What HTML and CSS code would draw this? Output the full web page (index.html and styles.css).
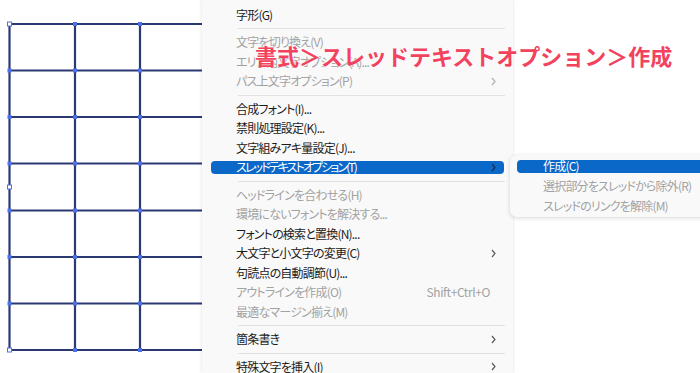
FILE: index.html
```html
<!DOCTYPE html>
<html lang="ja">
<head>
<meta charset="utf-8">
<link rel="stylesheet" href="styles.css">
</head>
<body>
<div class="stage">
  <div class="artboard">
    <svg width="202" height="373" viewBox="0 0 202 373">
      <g class="lines">
        <line x1="9.5" y1="24" x2="202" y2="24"/>
        <line x1="9.5" y1="70.5" x2="202" y2="70.5"/>
        <line x1="9.5" y1="117" x2="202" y2="117"/>
        <line x1="9.5" y1="163.5" x2="202" y2="163.5"/>
        <line x1="9.5" y1="210.5" x2="202" y2="210.5"/>
        <line x1="9.5" y1="257" x2="202" y2="257"/>
        <line x1="9.5" y1="303.5" x2="202" y2="303.5"/>
        <line x1="9.5" y1="350" x2="202" y2="350"/>
        <line x1="9.5" y1="24" x2="9.5" y2="350"/>
        <line x1="75" y1="24" x2="75" y2="350"/>
        <line x1="140" y1="24" x2="140" y2="350"/>
      </g>
      <g class="pts">
        <rect x="73" y="22" width="4" height="4"/><rect x="138" y="22" width="4" height="4"/>
        <rect x="7.5" y="68.5" width="4" height="4"/><rect x="73" y="68.5" width="4" height="4"/><rect x="138" y="68.5" width="4" height="4"/>
        <rect x="7.5" y="115" width="4" height="4"/><rect x="73" y="115" width="4" height="4"/><rect x="138" y="115" width="4" height="4"/>
        <rect x="7.5" y="161.5" width="4" height="4"/><rect x="73" y="161.5" width="4" height="4"/><rect x="138" y="161.5" width="4" height="4"/>
        <rect x="7.5" y="208.5" width="4" height="4"/><rect x="73" y="208.5" width="4" height="4"/><rect x="138" y="208.5" width="4" height="4"/>
        <rect x="7.5" y="255" width="4" height="4"/><rect x="73" y="255" width="4" height="4"/><rect x="138" y="255" width="4" height="4"/>
        <rect x="7.5" y="301.5" width="4" height="4"/><rect x="73" y="301.5" width="4" height="4"/><rect x="138" y="301.5" width="4" height="4"/>
        <rect x="73" y="348" width="4" height="4"/><rect x="138" y="348" width="4" height="4"/>
      </g>
      <g class="hollow">
        <rect x="7.5" y="22" width="4" height="4"/>
        <rect x="7.5" y="185" width="4" height="4"/>
        <rect x="7.5" y="348" width="4" height="4"/>
      </g>
    </svg>
  </div>

  <div class="menu">
    <div class="item"><span class="label">字形(G)</span></div>
    <div class="sep"></div>
    <div class="item off"><span class="label">文字を切り換え(V)</span></div>
    <div class="item off"><span class="label">エリア内文字オプション(A)...</span></div>
    <div class="item off"><span class="label">パス上文字オプション(P)</span><svg class="chev" width="5" height="9" viewBox="0 0 5 9"><polyline points="1,1 4,4.5 1,8"/></svg></div>
    <div class="sep"></div>
    <div class="item"><span class="label">合成フォント(I)...</span></div>
    <div class="item"><span class="label">禁則処理設定(K)...</span></div>
    <div class="item"><span class="label">文字組みアキ量設定(J)...</span></div>
    <div class="item active"><span class="label tight">スレッドテキストオプション(T)</span><svg class="chev" width="5" height="9" viewBox="0 0 5 9"><polyline points="1,1 4,4.5 1,8"/></svg></div>
    <div class="sep"></div>
    <div class="item off"><span class="label">ヘッドラインを合わせる(H)</span></div>
    <div class="item off"><span class="label">環境にないフォントを解決する...</span></div>
    <div class="item"><span class="label">フォントの検索と置換(N)...</span></div>
    <div class="item"><span class="label">大文字と小文字の変更(C)</span><svg class="chev" width="5" height="9" viewBox="0 0 5 9"><polyline points="1,1 4,4.5 1,8"/></svg></div>
    <div class="item"><span class="label">句読点の自動調節(U)...</span></div>
    <div class="item off"><span class="label">アウトラインを作成(O)</span><span class="key">Shift+Ctrl+O</span></div>
    <div class="item off"><span class="label">最適なマージン揃え(M)</span></div>
    <div class="sep"></div>
    <div class="item"><span class="label">箇条書き</span><svg class="chev" width="5" height="9" viewBox="0 0 5 9"><polyline points="1,1 4,4.5 1,8"/></svg></div>
    <div class="sep"></div>
    <div class="item"><span class="label">特殊文字を挿入(I)</span><svg class="chev" width="5" height="9" viewBox="0 0 5 9"><polyline points="1,1 4,4.5 1,8"/></svg></div>
  </div>

  <div class="side">
    <div class="submenu">
      <div class="sitem active">作成(C)</div>
      <div class="sitem off">選択部分をスレッドから除外(R)</div>
      <div class="sitem off">スレッドのリンクを解除(M)</div>
    </div>
  </div>

  <div class="annotation">書式＞スレッドテキストオプション＞作成</div>
</div>
</body>
</html>
```

FILE: styles.css
```css
html, body {
  margin: 0;
  padding: 0;
  background: #ffffff;
}

.stage {
  position: relative;
  display: flex;
  width: 700px;
  height: 373px;
  overflow: hidden;
  font-family: "Noto Sans CJK JP", "Noto Sans", sans-serif;
}

.artboard {
  width: 202px;
  flex: none;
}

.artboard svg {
  display: block;
}

.lines line {
  stroke: #2c3872;
  stroke-width: 2.2;
}

.pts rect {
  fill: #4a72ee;
}

.hollow rect {
  fill: #ffffff;
  stroke: #4a72ee;
  stroke-width: 1;
}

.menu {
  width: 311px;
  flex: none;
  display: flex;
  flex-direction: column;
  background: #f9f9f9;
  box-shadow: -1px 0 3px rgba(0, 0, 0, 0.08), 1px 0 2px rgba(0, 0, 0, 0.06);
  padding-top: 5px;
  box-sizing: border-box;
  position: relative;
  z-index: 1;
}

.item {
  height: 19.5px;
  flex: none;
  margin: 0 9px;
  padding: 0 8px 0 25px;
  display: flex;
  align-items: center;
  font-size: 12px;
  letter-spacing: -0.8px;
  line-height: 1;
  color: #1c1c1c;
  font-feature-settings: "palt";
  white-space: nowrap;
}

.item .label {
  flex: 1;
}

.item .label.tight {
  letter-spacing: -1.9px;
}

.item.off {
  color: #a2a2a2;
}

.item.active {
  height: 13.5px;
  margin-top: 3px;
  margin-bottom: 3px;
  background: #0a68c9;
  border-radius: 4px;
  color: #ffffff;
}

.item .key {
  margin-right: 6px;
  letter-spacing: -0.4px;
  font-feature-settings: normal;
}

.chev {
  display: block;
  fill: none;
  stroke: #5a5a5a;
  stroke-width: 1.2;
}

.item.off .chev {
  stroke: #b0b0b0;
}

.item.active .chev {
  stroke: #1b2c55;
}

.sep {
  height: 1px;
  flex: none;
  background: #e2e2e2;
  margin: 3.5px 8px 3.5px 36px;
}

.side {
  flex: 1;
  margin-left: -3px;
  padding-top: 155px;
  position: relative;
  z-index: 2;
}

.submenu {
  width: 260px;
  display: flex;
  flex-direction: column;
  background: #f9f9f9;
  border-radius: 7px;
  box-shadow: 0 1px 4px rgba(0, 0, 0, 0.16);
  padding: 1.5px 0 1px;
}

.sitem {
  height: 19.8px;
  flex: none;
  margin-left: 7px;
  padding-left: 26px;
  display: flex;
  align-items: center;
  font-size: 12px;
  letter-spacing: -0.8px;
  line-height: 1;
  color: #1c1c1c;
  font-feature-settings: "palt";
  white-space: nowrap;
}

.sitem.off {
  color: #a2a2a2;
}

.sitem.active {
  height: 12.8px;
  margin-top: 3.5px;
  margin-bottom: 3.5px;
  background: #0a68c9;
  color: #ffffff;
  border-radius: 4px 0 0 4px;
}

.annotation {
  position: absolute;
  left: 255px;
  top: 40px;
  z-index: 3;
  font-size: 22px;
  font-weight: 700;
  line-height: 30px;
  color: #f2425d;
  white-space: nowrap;
  text-shadow: 0 0 2px #ffffff, 0 0 1px #ffffff;
}
```
